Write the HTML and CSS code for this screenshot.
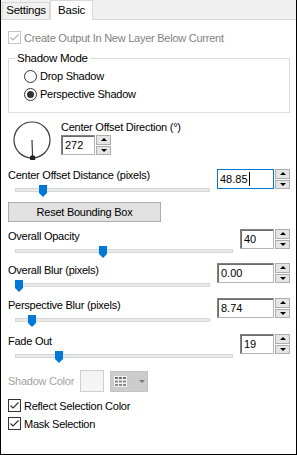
FILE: index.html
```html
<!DOCTYPE html>
<html>
<head>
<meta charset="utf-8">
<link rel="stylesheet" href="styles.css">
</head>
<body>
<div class="window">
  <div class="tabs">
    <div class="tab">Settings</div>
    <div class="tab active">Basic</div>
  </div>
  <div class="panel">
    <div class="check disabled">
      <svg class="cb" width="13" height="13" viewBox="0 0 13 13"><rect x=".5" y=".5" width="12" height="12" fill="#fff" stroke="#c4c4c4"/><path d="M2.5 6.5l2.5 2.5 5.5-5.5" fill="none" stroke="#b4b4b4" stroke-width="1.2"/></svg>
      <span>Create Output In New Layer Below Current</span>
    </div>

    <fieldset class="group">
      <legend>Shadow Mode</legend>
      <div class="radio"><span class="rb"></span><span>Drop Shadow</span></div>
      <div class="radio"><span class="rb on"></span><span>Perspective Shadow</span></div>
    </fieldset>

    <div class="dir-row">
      <svg class="dial" width="40" height="40" viewBox="0 0 40 40">
        <circle cx="20" cy="20" r="18" fill="none" stroke="#3a3a3a" stroke-width="1.2"/>
        <line x1="20" y1="20" x2="20.6" y2="38" stroke="#3a3a3a" stroke-width="1.2"/>
        <circle cx="20.6" cy="38" r="2.8" fill="#222"/>
      </svg>
      <div class="dir-ctl">
        <div class="lbl">Center Offset Direction (°)</div>
        <div class="spin">
          <div class="field narrow">272</div>
          <div class="arrows"><span class="up"></span><span class="down"></span></div>
        </div>
      </div>
    </div>

    <div class="param p1">
      <div class="lbl">Center Offset Distance (pixels)</div>
      <div class="spin">
        <div class="field wide focus">48.85<span class="caret"></span></div>
        <div class="arrows"><span class="up"></span><span class="down"></span></div>
      </div>
      <div class="slider"><div class="track"></div><div class="thumb" style="left:24px"></div></div>
    </div>

    <div class="btn">Reset Bounding Box</div>

    <div class="param p3">
      <div class="lbl">Overall Opacity</div>
      <div class="spin">
        <div class="field narrow">40</div>
        <div class="arrows"><span class="up"></span><span class="down"></span></div>
      </div>
      <div class="slider"><div class="track"></div><div class="thumb" style="left:84px"></div></div>
    </div>

    <div class="param p4">
      <div class="lbl">Overall Blur (pixels)</div>
      <div class="spin">
        <div class="field wide">0.00</div>
        <div class="arrows"><span class="up"></span><span class="down"></span></div>
      </div>
      <div class="slider"><div class="track"></div><div class="thumb" style="left:0px"></div></div>
    </div>

    <div class="param p5">
      <div class="lbl">Perspective Blur (pixels)</div>
      <div class="spin">
        <div class="field wide">8.74</div>
        <div class="arrows"><span class="up"></span><span class="down"></span></div>
      </div>
      <div class="slider"><div class="track"></div><div class="thumb" style="left:13px"></div></div>
    </div>

    <div class="param p6">
      <div class="lbl">Fade Out</div>
      <div class="spin">
        <div class="field narrow">19</div>
        <div class="arrows"><span class="up"></span><span class="down"></span></div>
      </div>
      <div class="slider"><div class="track"></div><div class="thumb" style="left:40px"></div></div>
    </div>

    <div class="color-row">
      <span class="color-lbl">Shadow Color</span>
      <span class="swatch"></span>
      <span class="picker">
        <svg width="13" height="11" viewBox="0 0 13 11">
          <rect width="13" height="11" fill="#f2f2f2"/>
          <rect x="1" y="1" width="3" height="2" fill="#6f6f6f"/><rect x="5" y="1" width="3" height="2" fill="#6f6f6f"/><rect x="9" y="1" width="3" height="2" fill="#6f6f6f"/>
          <rect x="1" y="4.5" width="3" height="2" fill="#8a8a8a"/><rect x="5" y="4.5" width="3" height="2" fill="#8a8a8a"/><rect x="9" y="4.5" width="3" height="2" fill="#8a8a8a"/>
          <rect x="1" y="8" width="3" height="2" fill="#8a8a8a"/><rect x="5" y="8" width="3" height="2" fill="#8a8a8a"/><rect x="9" y="8" width="3" height="2" fill="#8a8a8a"/>
        </svg>
        <span class="caret-down"></span>
      </span>
    </div>

    <div class="check c1">
      <svg class="cb" width="13" height="13" viewBox="0 0 13 13"><rect x=".5" y=".5" width="12" height="12" fill="#fff" stroke="#333"/><path d="M2.5 6.5l2.5 2.5 5.5-5.5" fill="none" stroke="#333" stroke-width="1.2"/></svg>
      <span>Reflect Selection Color</span>
    </div>
    <div class="check c2">
      <svg class="cb" width="13" height="13" viewBox="0 0 13 13"><rect x=".5" y=".5" width="12" height="12" fill="#fff" stroke="#333"/><path d="M2.5 6.5l2.5 2.5 5.5-5.5" fill="none" stroke="#333" stroke-width="1.2"/></svg>
      <span>Mask Selection</span>
    </div>
  </div>
</div>
</body>
</html>
```

FILE: styles.css
```css
* { box-sizing: border-box; }
html, body { margin: 0; padding: 0; }
body {
  width: 297px;
  height: 455px;
  overflow: hidden;
  background: #fff;
  color: #000;
  font-family: "Liberation Sans", Arial, sans-serif;
  font-size: 11px;
  line-height: 14px;
  letter-spacing: -0.25px;
}
.window {
  height: 455px;
  border: 1px solid #000;
  border-top: 0;
  display: flex;
  flex-direction: column;
}
.tabs {
  height: 20px;
  flex: none;
  background: #f0f0f0;
  border-bottom: 1px solid #d9d9d9;
  display: flex;
  align-items: flex-end;
  padding-left: 1px;
}
.tab {
  height: 17px;
  width: 48px;
  border: 1px solid #d9d9d9;
  border-bottom: 0;
  text-align: center;
  line-height: 15px;
  font-size: 11.5px;
}
.tab.active {
  height: 20px;
  width: 43px;
  margin-bottom: -1px;
  background: #fff;
  line-height: 18px;
  padding-bottom: 2px;
}
.panel {
  flex: 1;
  padding: 10px 6px 0 7px;
  display: flex;
  flex-direction: column;
}
.check {
  display: flex;
  align-items: center;
  gap: 3px;
  height: 15px;
}
.check.disabled { color: #838383; }
.cb { display: block; flex: none; }
.check.c1 { margin-top: 6px; }
.check.c2 { margin-top: 3px; }

.group {
  margin: 6px 0 0 0;
  padding: 2px 6px 9px 6px;
  border: 1px solid #dcdcdc;
  min-width: 0;
}
.group legend {
  padding: 0 2px;
  line-height: 14px;
  font-size: 11.5px;
}
.radio {
  display: flex;
  align-items: center;
  gap: 3px;
  height: 18px;
  padding-left: 9px;
}
.rb {
  width: 13px;
  height: 13px;
  border: 1px solid #333;
  border-radius: 50%;
  background: #fff;
  display: flex;
  align-items: center;
  justify-content: center;
  flex: none;
}
.rb.on::after {
  content: "";
  width: 7px;
  height: 7px;
  border-radius: 50%;
  background: #333;
}

.dir-row {
  display: flex;
  margin-top: 7px;
}
.dial { display: block; margin-left: 4px; flex: none; }
.dir-ctl {
  margin-left: 9px;
  display: flex;
  flex-direction: column;
  align-items: flex-start;
}
.dir-ctl .spin { margin-top: 1px; }

.spin {
  display: flex;
  gap: 1px;
  height: 20px;
}
.field {
  height: 20px;
  border: 1px solid;
  border-color: #828282 #b4b4b4 #b4b4b4 #828282;
  box-shadow: inset 1px 1px 0 #6a6a6a;
  padding: 2px 0 0 3px;
  display: flex;
  align-items: flex-start;
  background: #fff;
  letter-spacing: 0;
}
.field.narrow { width: 34px; }
.field.wide { width: 57px; }
.field.focus {
  border-color: #0078d7;
  box-shadow: none;
  padding-left: 2px;
}
.caret {
  display: inline-block;
  width: 1px;
  height: 14px;
  background: #000;
  margin-left: 1px;
}
.arrows {
  width: 15px;
  display: flex;
  flex-direction: column;
  gap: 1px;
}
.arrows span {
  flex: 1;
  border: 1px solid #adadad;
  background: #e5e5e5;
  display: flex;
  align-items: center;
  justify-content: center;
}
.arrows .up::after {
  content: "";
  border-left: 3px solid transparent;
  border-right: 3px solid transparent;
  border-bottom: 3px solid #000;
}
.arrows .down::after {
  content: "";
  border-left: 3px solid transparent;
  border-right: 3px solid transparent;
  border-top: 3px solid #000;
}

.param {
  display: grid;
  grid-template-columns: 1fr auto;
  grid-template-rows: 14px 16px;
  column-gap: 7px;
}
.param .lbl { grid-column: 1; grid-row: 1; white-space: nowrap; }
.param .spin { grid-column: 2; grid-row: 1 / span 2; align-self: start; }
.param .slider { grid-column: 1; grid-row: 2; }
.p1 { margin-top: 8px; }
.p1 .spin { margin-top: 1px; }
.p3 { margin-top: 7px; }
.p4 { margin-top: 4px; }
.p5 { margin-top: 5px; }
.p6 { margin-top: 6px; }

.slider {
  position: relative;
  margin-left: 7px;
  height: 16px;
}
.track {
  margin-top: 6px;
  height: 4px;
  border: 1px solid #d6d6d6;
  background: #e7eaea;
}
.thumb {
  position: absolute;
  top: 3px;
  width: 8px;
  height: 12px;
  background: #0078d7;
  clip-path: polygon(0 0, 100% 0, 100% 66%, 50% 100%, 0 66%);
}

.btn {
  margin-top: 4px;
  width: 153px;
  height: 20px;
  border: 1px solid #adadad;
  background: #e1e1e1;
  text-align: center;
  line-height: 18px;
}

.color-row {
  margin-top: 6px;
  height: 22px;
  display: flex;
  align-items: center;
}
.color-lbl {
  width: 72px;
  color: #a3a3a3;
}
.swatch {
  width: 24px;
  height: 22px;
  border: 1px solid #cfcfcf;
  background: #f4f4f4;
}
.picker {
  margin-left: 6px;
  width: 38px;
  height: 21px;
  background: #cccccc;
  border: 1px solid #c2c2c2;
  display: flex;
  align-items: center;
  padding-left: 3px;
  gap: 12px;
}
.picker svg { display: block; }
.caret-down {
  border-left: 3px solid transparent;
  border-right: 3px solid transparent;
  border-top: 3px solid #7a7a7a;
}
```
